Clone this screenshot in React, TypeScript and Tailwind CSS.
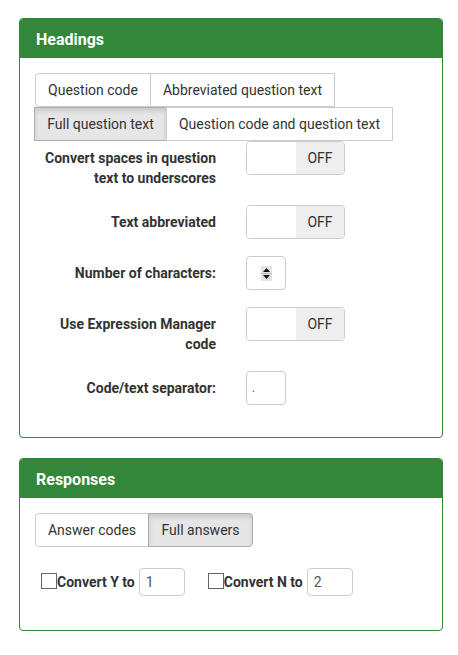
const font = { fontFamily: "Roboto, 'Liberation Sans', sans-serif" };

function Panel({ title, children }: { title: string; children: React.ReactNode }) {
  return (
    <div className="w-[424px] rounded-[4px] border border-[#32873a] bg-white">
      <div className="flex h-[39px] items-center rounded-t-[3px] bg-[#32873a] px-4 pt-[3px] text-[16px] font-bold text-white">
        {title}
      </div>
      {children}
    </div>
  );
}

function Toggle() {
  return (
    <div className="flex h-[34px] w-[99px] overflow-hidden rounded-[4px] border border-[#ccc]">
      <div className="w-[49px] bg-white" />
      <div className="flex flex-1 items-center justify-center bg-[#eee] text-[14px] text-[#333]">OFF</div>
    </div>
  );
}

function Spinner() {
  return (
    <div className="flex h-[34px] w-[40px] items-center justify-center rounded-[4px] border border-[#ccc] bg-white">
      <svg width="11" height="15" viewBox="0 0 11 15">
        <rect x="0" y="0" width="11" height="15" fill="#e3e3e3" />
        <line x1="0" y1="7.5" x2="11" y2="7.5" stroke="#bbb" />
        <path d="M5.5 2 L9 6 L2 6 Z" fill="#111" />
        <path d="M5.5 13 L9 9 L2 9 Z" fill="#111" />
      </svg>
    </div>
  );
}

function Row({ label, children }: { label: React.ReactNode; children: React.ReactNode }) {
  return (
    <div className="mb-[17px] flex">
      <div className="w-[181px] pt-[7px] text-right text-[14px] font-bold leading-[20px] text-[#333]">{label}</div>
      <div className="ml-[30px]">{children}</div>
    </div>
  );
}

function Tab({ label, active, className }: { label: string; active?: boolean; className?: string }) {
  return (
    <div
      className={
        "flex h-[34px] shrink-0 items-center justify-center whitespace-nowrap border text-[14px] text-[#333] " +
        (active ? "border-[#adadad] bg-[#e6e6e6] shadow-[inset_0_3px_5px_rgba(0,0,0,0.125)] " : "border-[#ccc] bg-white ") +
        (className ?? "")
      }
    >
      {label}
    </div>
  );
}

export default function App() {
  return (
    <div className="min-h-[655px] bg-white pl-[19px] pt-[18px]" style={font}>
      <Panel title="Headings">
        <div className="px-[15px] pb-[32px] pt-[15px]">
          <div className="flex">
            <Tab label="Question code" className="w-[116px] rounded-l-[4px]" />
            <Tab label="Abbreviated question text" className="-ml-px w-[185px]" />
          </div>
          <div className="-ml-px flex">
            <Tab label="Full question text" active className="w-[133px]" />
            <Tab label="Question code and question text" className="-ml-px w-[227px]" />
          </div>
          <div>
            <Row label={<>Convert spaces in question<br />text to underscores</>}>
              <Toggle />
            </Row>
            <Row label="Text abbreviated">
              <Toggle />
            </Row>
            <Row label="Number of characters:">
              <Spinner />
            </Row>
            <Row label={<>Use Expression Manager<br />code</>}>
              <Toggle />
            </Row>
            <div className="flex">
              <div className="w-[181px] pt-[7px] text-right text-[14px] font-bold leading-[20px] text-[#333]">
                Code/text separator:
              </div>
              <div className="ml-[30px] flex h-[34px] w-[40px] items-center rounded-[4px] border border-[#ccc] bg-white px-[5px] text-[12px] text-[#555]">
                .
              </div>
            </div>
          </div>
        </div>
      </Panel>

      <div className="h-[20px]" />

      <Panel title="Responses">
        <div className="px-[15px] pb-[34px] pt-[15px]">
          <div className="flex">
            <Tab label="Answer codes" className="w-[114px] rounded-l-[4px]" />
            <Tab label="Full answers" active className="-ml-px w-[105px] rounded-r-[4px]" />
          </div>
          <div className="mt-[21px] flex items-center pl-[6px]">
            <span className="mt-[-3px] h-[16px] w-[16px] border border-[#666] bg-white" />
            <span className="text-[14px] font-bold text-[#333]">Convert Y to</span>
            <div className="ml-[4px] flex h-[28px] w-[46px] items-center rounded-[4px] border border-[#ccc] px-[6px] text-[14px] text-[#555]">
              1
            </div>
            <span className="ml-[23px] mt-[-3px] h-[16px] w-[16px] border border-[#666] bg-white" />
            <span className="text-[14px] font-bold text-[#333]">Convert N to</span>
            <div className="ml-[4px] flex h-[28px] w-[46px] items-center rounded-[4px] border border-[#ccc] px-[6px] text-[14px] text-[#555]">
              2
            </div>
          </div>
        </div>
      </Panel>
    </div>
  );
}
